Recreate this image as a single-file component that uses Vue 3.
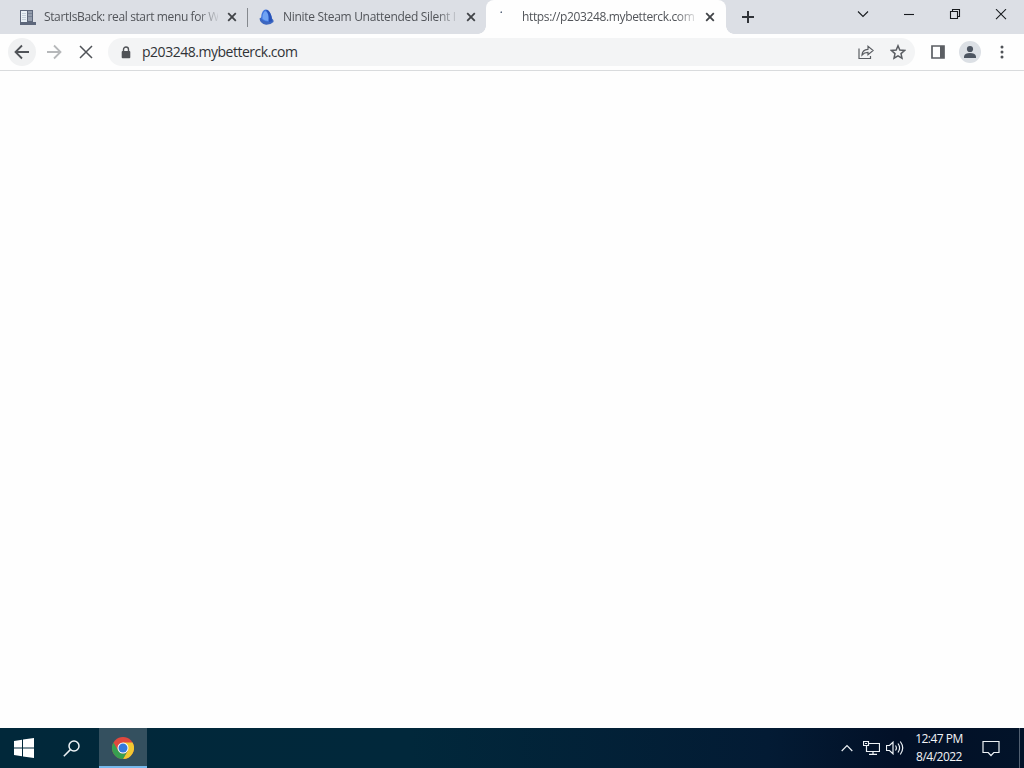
<script setup>
const tabs = [
  { title: 'StartIsBack: real start menu for W', icon: 'start', cls: 'first' },
  { title: 'Ninite Steam Unattended Silent I', icon: 'ninite', cls: 'second' },
  { title: 'https://p203248.mybetterck.com', icon: 'load', cls: 'active' },
]
</script>

<template>
  <div class="screen">
    <header class="strip">
      <div v-for="t in tabs" :key="t.icon" class="tab" :class="t.cls">
        <svg v-if="t.icon === 'start'" class="fav" viewBox="0 0 16 16">
          <path d="M0 1h13v12h3v3H0z" fill="#5d677b" />
          <path d="M1 2h6v11H1z" fill="#e8eff6" />
          <path d="M2 4.5h4M2 6.5h4M2 8.5h4M2 10.5h4" stroke="#bac6d3" stroke-width=".8" />
          <path d="M8 2h4v10H8z" fill="#939cac" />
          <path d="M8 4.5h4M8 7.5h4" stroke="#707b8e" stroke-width=".8" />
        </svg>
        <svg v-else-if="t.icon === 'ninite'" class="fav" viewBox="0 0 16 16">
          <path d="M.5 9.5Q2 8 4 8l8 1Q15 10.5 14.5 13Q11.5 16 7 15.8Q1 14.5.5 9.5Z" fill="#3d67bf" />
          <path d="M2.2 10Q1.8 4 5 1Q7.5-.2 9.8 2Q13.2 6 13 12.5Q7 14.5 2.2 10Z" fill="#3f75de" />
          <path d="M3.5 10Q3 4.5 6 2Q9 3 9.5 7.5L9.3 12Q6 12 3.5 10Z" fill="#70a3f3" />
          <path d="M7 1Q10.5 5 9.8 13L13 12.5Q13.2 6 9.8 2Q8.5.8 7 1Z" fill="#2852b6" />
        </svg>
        <svg v-else class="fav" viewBox="0 0 16 16"><path d="M1 3l2-.8v1.8h-1z" fill="#58657b" /></svg>
        <span class="title">{{ t.title }}</span>
        <svg class="close" viewBox="0 0 10 10"><path d="M1.2 1.2l7.6 7.6M8.8 1.2L1.2 8.8" /></svg>
      </div>
      <svg class="plus" viewBox="0 0 12 12"><path d="M6 0v12M0 6h12" /></svg>
      <div class="window">
        <svg viewBox="0 0 12 12"><path d="M1 2.5l5 5 5-5" /></svg>
        <svg viewBox="0 0 12 12"><path d="M1 5.5h10" /></svg>
        <svg viewBox="0 0 12 12"><path d="M3.5 2.5v-2h7v7h-2M1.5 2.5h7v7h-7z" /></svg>
        <svg viewBox="0 0 12 12"><path d="M1 .2l10 10M11 .2L1 10.2" /></svg>
      </div>
    </header>
    <nav class="bar">
      <div class="back"><svg viewBox="0 0 16 16"><path d="M15 8H2M8 1.5L1.5 8 8 14.5" /></svg></div>
      <svg class="nav fwd" viewBox="0 0 16 16"><path d="M1 8h13M8 1.5L14.5 8 8 14.5" /></svg>
      <svg class="nav stop" viewBox="0 0 16 16"><path d="M2 2l12 12M14 2L2 14" /></svg>
      <div class="omni">
        <svg class="lock" viewBox="0 0 10 13"><path d="M2.5 6V3.5a2.5 2.5 0 015 0V6" fill="none" stroke="#505357" stroke-width="1.4" /><rect x=".7" y="5" width="8.6" height="7.2" rx="1" fill="#505357" /></svg>
        <span class="url">p203248.mybetterck.com</span>
        <svg class="share" viewBox="0 0 16 16"><path d="M1 4.5v10h11.5V12M4 11Q4.2 5.6 10 5.3V2.2L15.2 6.5 10 10.8V8.3Q6.3 8.3 4 11Z" /></svg>
        <svg class="star" viewBox="0 0 16 16"><path d="M8 1.8l1.8 4.3 4.7.4-3.5 3.1 1 4.6L8 11.8l-4 2.4 1-4.6-3.5-3.1 4.7-.4z" /></svg>
      </div>
      <svg class="panel" viewBox="0 0 14 14"><path d="M1 1h12v12H1z" fill="none" stroke="#5b5e63" stroke-width="1.7" /><path d="M9 1h4v12H9z" fill="#5b5e63" /></svg>
      <svg class="person" viewBox="0 0 22 22"><circle cx="11" cy="11" r="11" fill="#dce0e5" /><circle cx="11" cy="8" r="3.1" /><path d="M5 17v-1.8Q6 12 11 12t6 3.2V17z" /></svg>
      <svg class="dots" viewBox="0 0 4 14"><circle cx="2" cy="2" r="1.5" /><circle cx="2" cy="7" r="1.5" /><circle cx="2" cy="12" r="1.5" /></svg>
    </nav>
    <main></main>
    <footer>
      <svg class="win" viewBox="0 0 20 20"><path d="M0 3l8-1.2v7.7H0zM9 1.6L20 0v9.5H9zM0 10.5h8v7.7L0 17zM9 10.5h11V20L9 18.4z" fill="#fff" /></svg>
      <svg class="search" viewBox="0 0 17 17"><circle cx="11" cy="6" r="5" /><path d="M7.4 9.6L.8 16.2" /></svg>
      <div class="chrome">
        <svg viewBox="0 0 48 48">
          <circle cx="24" cy="24" r="24" fill="#e0483e" />
          <path d="M24 12h20.8A24 24 0 0124 48l10.4-18z" fill="#f2c831" />
          <path d="M3.2 12L13.6 30A12 12 0 0034.4 30L24 48A24 24 0 013.2 12z" fill="#379f50" />
          <circle cx="24" cy="24" r="12" fill="#fff" /><circle cx="24" cy="24" r="9.8" fill="#3478dc" />
        </svg>
      </div>
      <svg class="up" viewBox="0 0 12 8"><path d="M.7 7L6 1.7 11.3 7" /></svg>
      <svg class="net" viewBox="0 0 17 14"><path d="M5.5 2.5h11v8h-13V5M.5.5h5v4h-5zM3.5 4.5v6M10 10.5v3M6 13.3h8M2 2.5h2" /></svg>
      <svg class="sound" viewBox="0 0 18 14"><path d="M.5 4.5h3L7 1.2v11.6L3.5 9.5h-3zM9.5 4.5q1.8 2.5 0 5M12 2.5q3.2 4.5 0 9M14.3.5q4.8 6.5 0 13" /></svg>
      <div class="clock"><span class="time">12:47 PM</span><span class="date">8/4/2022</span></div>
      <svg class="note" viewBox="0 0 18 17"><path d="M1 1.5h16v11h-5.2L9 15.5l-2.8-3H1z" /></svg>
      <i class="peek"></i>
    </footer>
  </div>
</template>

<style>
body { margin: 0; overflow: hidden; }
</style>
<style scoped>
* { box-sizing: border-box; }
svg { display: block; flex: none; }
.screen { width: 1024px; height: 768px; display: flex; flex-direction: column; background: #fefefe; font-family: "Open Sans", "Noto Sans", sans-serif; overflow: hidden; }
.strip { height: 34px; display: flex; background: #dcdfe5; padding-left: 8px; flex: none; }
.tab { width: 239px; height: 34px; display: flex; align-items: center; padding-left: 12px; position: relative; flex: none; }
.first::after { content: ''; position: absolute; right: -1px; top: 8px; width: 1px; height: 19px; background: #85898e; }
.active { width: 240px; background: #fefefe; border-radius: 8px 8px 0 0; }
.active::before, .active::after { content: ''; position: absolute; bottom: 0; width: 8px; height: 8px; }
.active::before { left: -8px; background: radial-gradient(circle at 0 0, #dcdfe5 7.5px, #fefefe 8px); }
.active::after { right: -8px; background: radial-gradient(circle at 100% 0, #dcdfe5 7.5px, #fefefe 8px); }
.fav { width: 16px; height: 16px; }
.active .fav { margin-left: 1px; margin-right: -1px; }
.title { width: 174px; height: 20px; line-height: 20px; margin-left: 8px; overflow: hidden; white-space: nowrap; font-size: 12px; color: #515459; mask-image: linear-gradient(90deg, #000 154px, transparent 177px); }
.first .title { letter-spacing: -.38px; }
.second .title { letter-spacing: -.3px; }
.active .title { letter-spacing: -.36px; }
.close { width: 10px; height: 10px; margin-left: 9px; }
.close path { fill: none; stroke: #404347; stroke-width: 1.8; }
.plus { width: 12px; height: 12px; margin: 11px 0 0 16px; }
.plus path { stroke: #303338; stroke-width: 2; }
.window { display: flex; gap: 34px; margin: 9px 0 0 103px; }
.window svg { width: 12px; height: 12px; }
.window path { fill: none; stroke: #171a1e; stroke-width: 1.1; }
.bar { height: 37px; display: flex; align-items: center; padding-left: 8px; border-bottom: 1px solid #d9dbdd; flex: none; }
.back { width: 28px; height: 28px; border-radius: 50%; background: #f0f1f2; display: grid; place-items: center; flex: none; }
.back svg, .nav { width: 16px; height: 16px; }
.nav { margin-left: 16px; }
.back + .nav { margin-left: 10px; }
.back path, .nav path { fill: none; stroke: #505358; stroke-width: 1.8; }
.nav.fwd path { stroke: #b6b8ba; }
.nav.stop path { stroke-width: 1.5; }
.omni { width: 807px; height: 28px; margin-left: 14px; border-radius: 14px; background: #f3f4f5; display: flex; align-items: center; padding-left: 13px; flex: none; }
.lock { width: 10px; height: 13px; }
.url { width: 707px; height: 22px; line-height: 22px; margin-left: 11px; font-size: 14px; color: #303337; letter-spacing: -.48px; }
.share, .star { width: 16px; height: 16px; margin-left: 9px; }
.star { margin-left: 16px; }
.share path, .star path { fill: none; stroke: #5a5d62; stroke-width: 1.2; }
.star path { stroke-width: 1.5; }
.panel { width: 14px; height: 14px; margin-left: 16px; }
.person { width: 22px; height: 22px; margin-left: 14px; fill: #4d5561; }
.dots { width: 4px; height: 14px; margin-left: 19px; fill: #505358; }
main { flex: 1; }
footer { height: 40px; flex: none; display: flex; align-items: center; background: linear-gradient(90deg, #01283a 0%, #01283b 40%, #031b34 75%, #021027 88%, #021329 100%); padding-left: 14px; }
.win { width: 20px; height: 20px; }
.search { width: 17px; height: 17px; margin-left: 29px; }
.search path, .search circle, .up path, .net path, .sound path, .note path { fill: none; stroke: #edf2f6; stroke-width: 1.2; }
.search path, .search circle { stroke-width: 1.5; }
.chrome { width: 48px; height: 40px; margin-left: 19px; display: grid; place-items: center; background: #34505f; border-bottom: 2px solid #76b9ed; flex: none; }
.chrome svg { width: 22px; height: 22px; margin-top: 2px; }
.up { width: 12px; height: 8px; margin-left: 694px; }
.net { width: 17px; height: 14px; margin-left: 10px; }
.sound { width: 18px; height: 14px; margin-left: 6px; }
.clock { width: 50px; margin-left: 10px; display: flex; flex-direction: column; align-items: center; color: #f2f4f7; font-size: 12px; line-height: 18px; white-space: nowrap; flex: none; }
.time { letter-spacing: -.5px; }
.date { letter-spacing: -.5px; }
.note { width: 18px; height: 17px; margin-left: 18px; }
.peek { width: 1px; height: 40px; margin-left: 19px; background: #526071; }
</style>
